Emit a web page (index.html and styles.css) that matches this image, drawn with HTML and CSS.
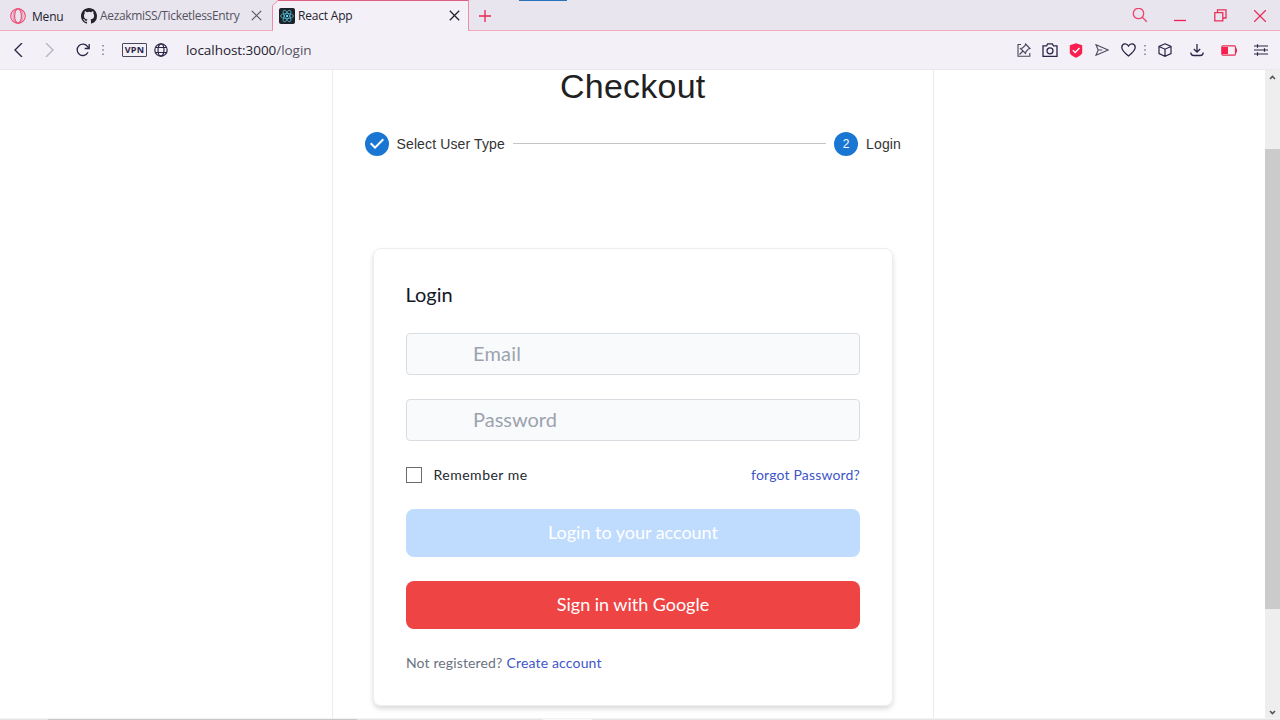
FILE: index.html
```html
<!DOCTYPE html>
<html lang="en">
<head>
<meta charset="utf-8">
<title>React App</title>
<link rel="stylesheet" href="styles.css">
</head>
<body>
<header class="tabbar">
  <div class="menu">
    <svg width="16" height="16" viewBox="0 0 16 16" fill="none" stroke="#ee4a72" stroke-width="1.1"><circle cx="8" cy="8" r="7.3"/><ellipse cx="8" cy="8" rx="3.4" ry="7.2"/><ellipse cx="8" cy="8" rx="5" ry="7.2" stroke-width=".6"/></svg>
    <span class="menu-text">Menu</span>
  </div>
  <div class="tab">
    <svg width="16" height="16" viewBox="0 0 16 16" fill="#24222c"><path d="M8 0C3.58 0 0 3.58 0 8c0 3.54 2.29 6.53 5.47 7.59.4.07.55-.17.55-.38 0-.19-.01-.82-.01-1.49-2.01.37-2.53-.49-2.69-.94-.09-.23-.48-.94-.82-1.13-.28-.15-.68-.52-.01-.53.63-.01 1.08.58 1.23.82.72 1.21 1.87.87 2.33.66.07-.52.28-.87.51-1.07-1.78-.2-3.64-.89-3.64-3.95 0-.87.31-1.59.82-2.15-.08-.2-.36-1.02.08-2.12 0 0 .67-.21 2.2.82a7.5 7.5 0 0 1 4 0c1.53-1.04 2.2-.82 2.2-.82.44 1.1.16 1.92.08 2.12.51.56.82 1.27.82 2.15 0 3.07-1.87 3.75-3.65 3.95.29.25.54.73.54 1.48 0 1.07-.01 1.93-.01 2.2 0 .21.15.46.55.38A8 8 0 0 0 16 8c0-4.42-3.58-8-8-8z"/></svg>
    <span class="tab-title">AezakmiSS/TicketlessEntry</span>
    <svg class="tab-close" width="11" height="11" viewBox="0 0 11 11" stroke="#5a5862" stroke-width="1.2"><path d="M.8.8l9.4 9.4M10.2.8L.8 10.2"/></svg>
  </div>
  <div class="tab tab-active">
    <svg class="tab-shape" width="198" height="31" viewBox="0 0 198 31"><path d="M0 31V30.5H.5V5.5L6 .5H196.500V30.500H198V31z" fill="#f3f1f7"/><path d="M0 30.500H.5V5.500L6 .5H196.500V30.500H198" fill="none" stroke="#f08ba6"/><path d="M6 .4H196.500" stroke="#dc5f80" stroke-width="1.400"/></svg>
    <svg class="react" width="16" height="16" viewBox="0 0 16 16"><rect width="16" height="16" rx="2" fill="#1d2229"/><g fill="none" stroke="#53bed5" stroke-width=".75"><ellipse cx="8" cy="8" rx="6.500" ry="2.500"/><ellipse cx="8" cy="8" rx="6.500" ry="2.500" transform="rotate(60 8 8)"/><ellipse cx="8" cy="8" rx="6.500" ry="2.500" transform="rotate(120 8 8)"/></g><circle cx="8" cy="8" r="1.200" fill="#61dafb"/></svg>
    <span class="tab-title tab-title-active">React App</span>
    <svg class="tab-close-active" width="11" height="11" viewBox="0 0 11 11" stroke="#25222f" stroke-width="1.300"><path d="M.8.8l9.4 9.4M10.2.8L.8 10.2"/></svg>
  </div>
  <svg class="new-tab" width="12" height="12" viewBox="0 0 12 12" stroke="#e62450" stroke-width="1.300"><path d="M6 0v12M0 6h12"/></svg>
  <span class="load-mark"></span>
  <div class="window-tools">
    <svg class="search" width="16" height="16" viewBox="0 0 16 16" fill="none" stroke="#ed446e" stroke-width="1.300"><circle cx="6.500" cy="5.500" r="5.200"/><path d="M10.300 9.300l4.500 4.500"/></svg>
    <svg width="12" height="14" viewBox="0 0 12 14" stroke="#f01f50" stroke-width="1.300"><path d="M0 11.500h12"/></svg>
    <svg width="13" height="13" viewBox="0 0 13 13" fill="none" stroke="#e8305a" stroke-width="1.300"><path d="M.8 3.600h8v8.200h-8zM3.500 3.600V.8h8.500v8.200H9"/></svg>
    <svg width="12" height="12" viewBox="0 0 12 12" stroke="#e8305a" stroke-width="1.300"><path d="M0 0l12 12M12 0L0 12"/></svg>
  </div>
</header>
<nav class="addressbar">
  <svg class="back" width="9" height="14" viewBox="0 0 9 14" fill="none" stroke="#2d2547" stroke-width="1.400"><path d="M8 0L1 7l7 7"/></svg>
  <svg class="forward" width="9" height="14" viewBox="0 0 9 14" fill="none" stroke="#b5b2bd" stroke-width="1.300"><path d="M1 0l7 7-7 7"/></svg>
  <svg class="reload" width="15" height="14" viewBox="0 0 15 14" fill="none" stroke="#2d2547" stroke-width="1.300"><path d="M12 9.300A5.700 5.700 0 1 1 11.600 3.600l1.400 1.600M13.200 1v4.500H8.700"/></svg>
  <svg class="dots" width="2" height="12" viewBox="0 0 2 12" fill="#777286"><path d="M.3 1h1.400v1.500H.3zM.3 5.200h1.400v1.500H.3zM.3 9.400h1.400v1.500H.3z"/></svg>
  <span class="vpn">VPN</span>
  <svg class="globe" width="14" height="14" viewBox="0 0 14 14" fill="none" stroke="#2d2547" stroke-width="1.200"><circle cx="7" cy="7" r="6.200"/><ellipse cx="7" cy="7" rx="3" ry="6.200"/><path d="M1.500 4.500h11M1.500 9.500h11"/></svg>
  <span class="url">localhost:3000<span class="path">/login</span></span>
  <div class="tools">
    <svg width="14" height="14" viewBox="0 0 14 14" fill="none" stroke="#4a445d" stroke-width="1.100"><path d="M4 1.500H1v11.800h11.800V10M8.500 1l4.500 4.500-1.500.4L9 8.500l-.5 2-5-5 2-.5L8.200 2.500zM6 8l-3.500 3.500"/></svg>
    <svg width="16" height="14" viewBox="0 0 16 14" fill="none" stroke="#2d2547" stroke-width="1.300"><path d="M1 2.800h3.500L5.700.8h4.600l1.200 2H15v10.500H1z"/><circle cx="8" cy="7.800" r="3"/></svg>
    <svg width="14" height="15" viewBox="0 0 14 15"><path d="M7 .3l6.200 2v7.200c0 2-3.500 4.100-6.200 5.200C4.300 13.600.8 11.500.8 9.500V2.300z" fill="#fa1e4e"/><path d="M3.800 7.200l2.400 2.300L10.500 5" fill="none" stroke="#fff" stroke-width="1.300"/></svg>
    <svg width="14" height="12" viewBox="0 0 14 12" fill="none" stroke="#4c475b" stroke-width="1.100"><path d="M1 .8L13.200 6 1 11.200 3.200 6zM3.200 6h4"/></svg>
    <svg width="15" height="14" viewBox="0 0 15 14" fill="none" stroke="#2d2547" stroke-width="1.300"><path d="M7.500 13C4 10.200.8 7.500.8 4.500c0-4 4.800-5 6.700-1.500C9.400-.5 14.200.5 14.200 4.500c0 3-3.200 5.700-6.700 8.500z"/></svg>
    <svg width="2" height="12" viewBox="0 0 2 12" fill="#777286"><path d="M.3 1h1.400v1.500H.3zM.3 5.200h1.400v1.500H.3zM.3 9.400h1.400v1.500H.3z"/></svg>
    <svg width="14" height="14" viewBox="0 0 14 14" fill="none" stroke="#2d2547" stroke-width="1.200"><path d="M7 .8l6 2.700v7L7 13.300l-6-2.800v-7zM1 3.500l6 2.700 6-2.700M7 6.200v7"/></svg>
    <svg width="14" height="14" viewBox="0 0 14 14" fill="none" stroke="#2d2547" stroke-width="1.300"><path d="M7 1v8M3.800 6L7 9.200 10.200 6M.8 9.500c0 2 1 3 3 3h6.400c2 0 3-1 3-3"/></svg>
    <svg width="16" height="11" viewBox="0 0 16 11"><path d="M2 .8h11.500c1 0 1 1 1 1.500v6.400c0 .5 0 1.500-1 1.500H2c-1 0-1.200-.5-1.200-1.500V2.300C.8 1.300 1 .8 2 .8z" fill="none" stroke="#e42c55" stroke-width="1.200"/><path d="M1 2h6v7H1z" fill="#fa1e4e"/><path d="M15.500 3.500v4" stroke="#e42c55"/></svg>
    <svg width="14" height="12" viewBox="0 0 14 12" stroke="#2d2547" stroke-width="1.200"><path d="M0 2h14M0 6h14M0 10h14M3.500.2v3.600M10.500 4.200v3.600M3.500 8.200v3.600"/></svg>
  </div>
</nav>
<div class="viewport">
  <main class="paper">
    <h1 class="title">Checkout</h1>
    <div class="stepper">
      <svg width="24" height="24" viewBox="0 0 24 24"><path d="M12 0a12 12 0 1 0 0 24 12 12 0 0 0 0-24zm-2 17l-5-5 1.400-1.400 3.600 3.600 7.600-7.600L19 8l-9 9z" fill="#1976d2"/></svg>
      <span class="step-label">Select User Type</span>
      <span class="connector"></span>
      <span class="step-number">2</span>
      <span class="step-label">Login</span>
    </div>
    <form class="login">
      <h2 class="login-title">Login</h2>
      <div class="field"><span class="t-email">Email</span></div>
      <div class="field">Password</div>
      <div class="options">
        <span class="box"></span>
        <span class="remember">Remember me</span>
        <a class="forgot">forgot Password?</a>
      </div>
      <div class="button button-blue">Login to your account</div>
      <div class="button button-red">Sign in with Google</div>
      <p class="register"><span class="t-not">Not registered?</span><a class="t-create">Create account</a></p>
    </form>
  </main>
  <div class="scrollbar">
    <svg width="7" height="5" viewBox="0 0 7 5" fill="none" stroke="#55555b" stroke-width="1.600"><path d="M1 4l2.500-2.500L6 4"/></svg>
    <span class="thumb"></span>
    <svg class="down" width="7" height="5" viewBox="0 0 7 5" fill="none" stroke="#55555b" stroke-width="1.600"><path d="M1 1l2.500 2.500L6 1"/></svg>
  </div>
</div>
<footer class="edge"><span class="edge-dark"></span><span class="edge-mid"></span><span class="edge-gap"></span></footer>
</body>
</html>
```
FILE: styles.css
```css
* { box-sizing: border-box; }
body { margin: 0; width: 1280px; height: 720px; overflow: hidden; display: flex; flex-direction: column; background: #fff; font-family: "Lato", sans-serif; }
svg { display: block; flex: none; }
span, a { white-space: nowrap; }
.tabbar { height: 31px; flex: none; display: flex; align-items: center; background: #e8e5ee; box-shadow: inset 0 -1px #f4abbd; font: 12px "Open Sans", sans-serif; }
.menu { width: 81px; padding-left: 10px; display: flex; align-items: center; gap: 6px; }
.menu-text { color: #24222c; padding-top: 2px; letter-spacing: -.2px; }
.tab { width: 191px; height: 31px; display: flex; align-items: center; }
.tab-title { color: #55535e; width: 151px; margin-left: 3px; font-size: 12px; letter-spacing: -.33px; }
.tab-active { width: 198px; position: relative; }
.tab-shape { position: absolute; left: 0; top: 0; }
.react, .tab-title-active, .tab-close-active { position: relative; }
.react { margin-left: 7px; }
.tab-title-active { color: #25222f; letter-spacing: -.2px; }
.new-tab { margin-left: 9px; }
.load-mark { width: 48px; height: 1px; background: #2772ba; margin-left: 28px; align-self: flex-start; }
.window-tools { margin-left: auto; padding-right: 14px; display: grid; grid-template-columns: 40px 40px 40px 12px; justify-items: start; align-items: center; }
.search { margin-left: -2px; }
.addressbar { height: 39px; flex: none; display: flex; align-items: center; background: #f3f1f7; border-bottom: 1px solid #eae8ed; padding: 0 3px 0 14px; }
.forward { margin-left: 22px; }
.reload { margin-left: 22px; }
.dots { margin-left: 11px; }
.vpn { width: 25px; height: 14px; margin-left: 18px; border: 1px solid #4c475b; border-radius: 1px; font: bold 9px/12px "Open Sans", sans-serif; text-align: center; color: #2d2547; letter-spacing: .3px; }
.globe { margin-left: 7px; }
.url { margin-left: 18px; font: 13.500px "Open Sans", sans-serif; color: #25222f; letter-spacing: -.05px; }
.path { color: #575260; }
.tools { margin-left: auto; display: grid; grid-template-columns: repeat(5, 26px) 8px repeat(4, 32px); justify-items: center; align-items: center; }
.viewport { height: 648px; flex: none; display: flex; }
.paper { width: 602px; height: 648px; margin-left: 332px; border: 1px solid #ececec; border-width: 0 1px; padding: 0 32px 0 31.500px; }
.title { margin: 0; height: 32px; font: 400 34px/32px "Liberation Sans", sans-serif; letter-spacing: .25px; text-align: center; color: #212121; }
.stepper { height: 24px; margin-top: 30px; display: flex; align-items: center; font: 14px "Liberation Sans", sans-serif; color: #333; }
.step-label { margin-left: 8px; letter-spacing: .13px; }
.connector { flex: 1; height: 1px; margin: -1px 8px 0; background: #c4c4c4; }
.step-number { width: 24px; height: 24px; border-radius: 50%; background: #1976d2; color: #fff; font-size: 12px; line-height: 24px; text-align: center; }
.login { width: 520px; height: 458px; margin: 92px 0 0 8.500px; border: 1px solid #eeeeef; border-radius: 8px; box-shadow: 0 3px 5px rgba(0,0,0,.14); padding: 32px; display: flex; flex-direction: column; }
.login-title { margin: 0 0 24px -.5px; height: 28px; font-size: 20px; line-height: 26px; font-weight: 400; color: #111827; }
.field { height: 42px; flex: none; margin-bottom: 24px; padding-left: 66px; border: 1px solid #d9dce1; border-radius: 4px; background: #f9fafc; color: #9ca3af; font-size: 20px; line-height: 38px; }
.t-email { letter-spacing: .2px; }
.options { display: flex; align-items: center; height: 20px; font-size: 14px; line-height: 18px; }
.box { width: 16px; height: 16px; border: 1px solid #6b6b6b; background: #fff; }
.remember { margin: -1px 0 0 11.500px; color: #222831; letter-spacing: .5px; }
.forgot { margin: -1px 0 0 auto; color: #4056c8; letter-spacing: .17px; }
.button { height: 48px; flex: none; margin-top: 24px; border-radius: 8px; color: #fff; font-size: 18px; line-height: 47px; text-align: center; letter-spacing: -.02px; }
.button-blue { background: #bfdbfe; }
.button-red { background: #ef4444; }
.register { margin: 24px 0 0; font-size: 14px; line-height: 19px; color: #6b7280; display: flex; gap: 4px; }
.t-not { letter-spacing: .13px; }
.t-create { color: #4056c8; letter-spacing: .17px; }
.scrollbar { width: 15px; margin-left: auto; background: #eee; display: flex; flex-direction: column; align-items: center; padding: 5px 0 3px; }
.thumb { width: 15px; height: 460px; margin-top: 69px; background: #cbcbcb; }
.down { margin-top: auto; }
.edge { height: 2px; flex: none; display: flex; background: #e6e6e6; border-top: 1px solid #f2f2f2; }
.edge-dark { width: 309px; margin-left: 48px; background: #c7c7c7; }
.edge-mid { width: 186px; }
.edge-gap { width: 49px; background: #f7f7f7; }
```
